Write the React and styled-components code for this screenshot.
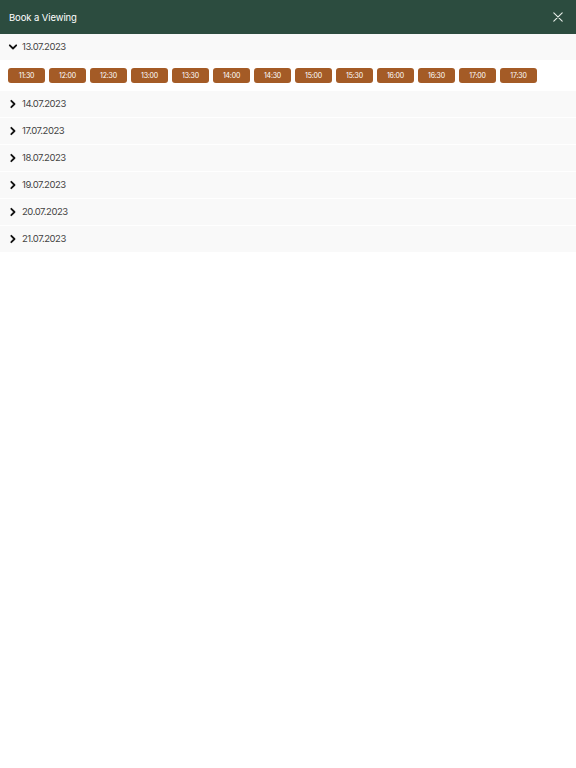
import React, { useState } from 'react'
import styled, { createGlobalStyle } from 'styled-components'

const GlobalStyle = createGlobalStyle`
  body {
    margin: 0;
    background: #ffffff;
    font-family: "Inter", "Noto Sans", sans-serif;
  }
`

const Header = styled.div`
  height: 34px;
  background-color: #2c4c3f;
  display: flex;
  align-items: center;
  justify-content: space-between;
  padding: 0 13px 0 9px;
`
const Title = styled.div`
  color: #ffffff;
  font-size: 9.5px;
  letter-spacing: -0.1px;
`
const Close = styled.button`
  border: none;
  background: none;
  padding: 0;
  width: 10px;
  height: 10px;
  display: flex;
  cursor: pointer;
`
const List = styled.div`
  display: flex;
  flex-direction: column;
`
const DateRow = styled.div`
  height: 26px;
  margin-bottom: 1px;
  background-color: #f9f9f9;
  display: flex;
  align-items: center;
  gap: 4px;
  padding-left: 8px;
  padding-bottom: 1px;
  box-sizing: border-box;
  cursor: pointer;
`
const DateText = styled.span`
  font-size: 9.5px;
  letter-spacing: -0.45px;
  color: #444444;
`
const Slots = styled.div`
  display: flex;
  flex-wrap: wrap;
  gap: 4px;
  padding: 8px 8px 8px;
  margin-top: -1px;
  background: #ffffff;
`
const Slot = styled.button`
  width: 37px;
  height: 15px;
  border: none;
  border-radius: 3px;
  background-color: #a45b26;
  color: #fff;
  font-family: inherit;
  font-size: 7px;
  letter-spacing: -0.2px;
  padding: 0;
  cursor: pointer;
`

const Chevron = ({ open }) => (
  <svg width="10" height="10" viewBox="0 0 10 10" fill="none" stroke="#111" strokeWidth="1.8" strokeLinecap="round" strokeLinejoin="round">
    {open ? <path d="M1.8 3.3 L5 6.5 L8.2 3.3" /> : <path d="M3.3 1.8 L6.5 5 L3.3 8.2" />}
  </svg>
)

const dates = ['13.07.2023', '14.07.2023', '17.07.2023', '18.07.2023', '19.07.2023', '20.07.2023', '21.07.2023']
const times = ['11:30', '12:00', '12:30', '13:00', '13:30', '14:00', '14:30', '15:00', '15:30', '16:00', '16:30', '17:00', '17:30']

const App = () => {
  const [open, setOpen] = useState('13.07.2023')
  return (
    <>
      <GlobalStyle />
      <Header>
        <Title>Book a Viewing</Title>
        <Close aria-label="close">
          <svg width="10" height="10" viewBox="0 0 10 10" stroke="#e8efe9" strokeWidth="1.1" strokeLinecap="round">
            <path d="M0.8 0.8 L9.2 9.2 M9.2 0.8 L0.8 9.2" />
          </svg>
        </Close>
      </Header>
      <List>
        {dates.map((d) => (
          <React.Fragment key={d}>
            <DateRow onClick={() => setOpen(open === d ? null : d)}>
              <Chevron open={open === d} />
              <DateText>{d}</DateText>
            </DateRow>
            {open === d && (
              <Slots>
                {times.map((t) => <Slot key={t}>{t}</Slot>)}
              </Slots>
            )}
          </React.Fragment>
        ))}
      </List>
    </>
  )
}

export default App
